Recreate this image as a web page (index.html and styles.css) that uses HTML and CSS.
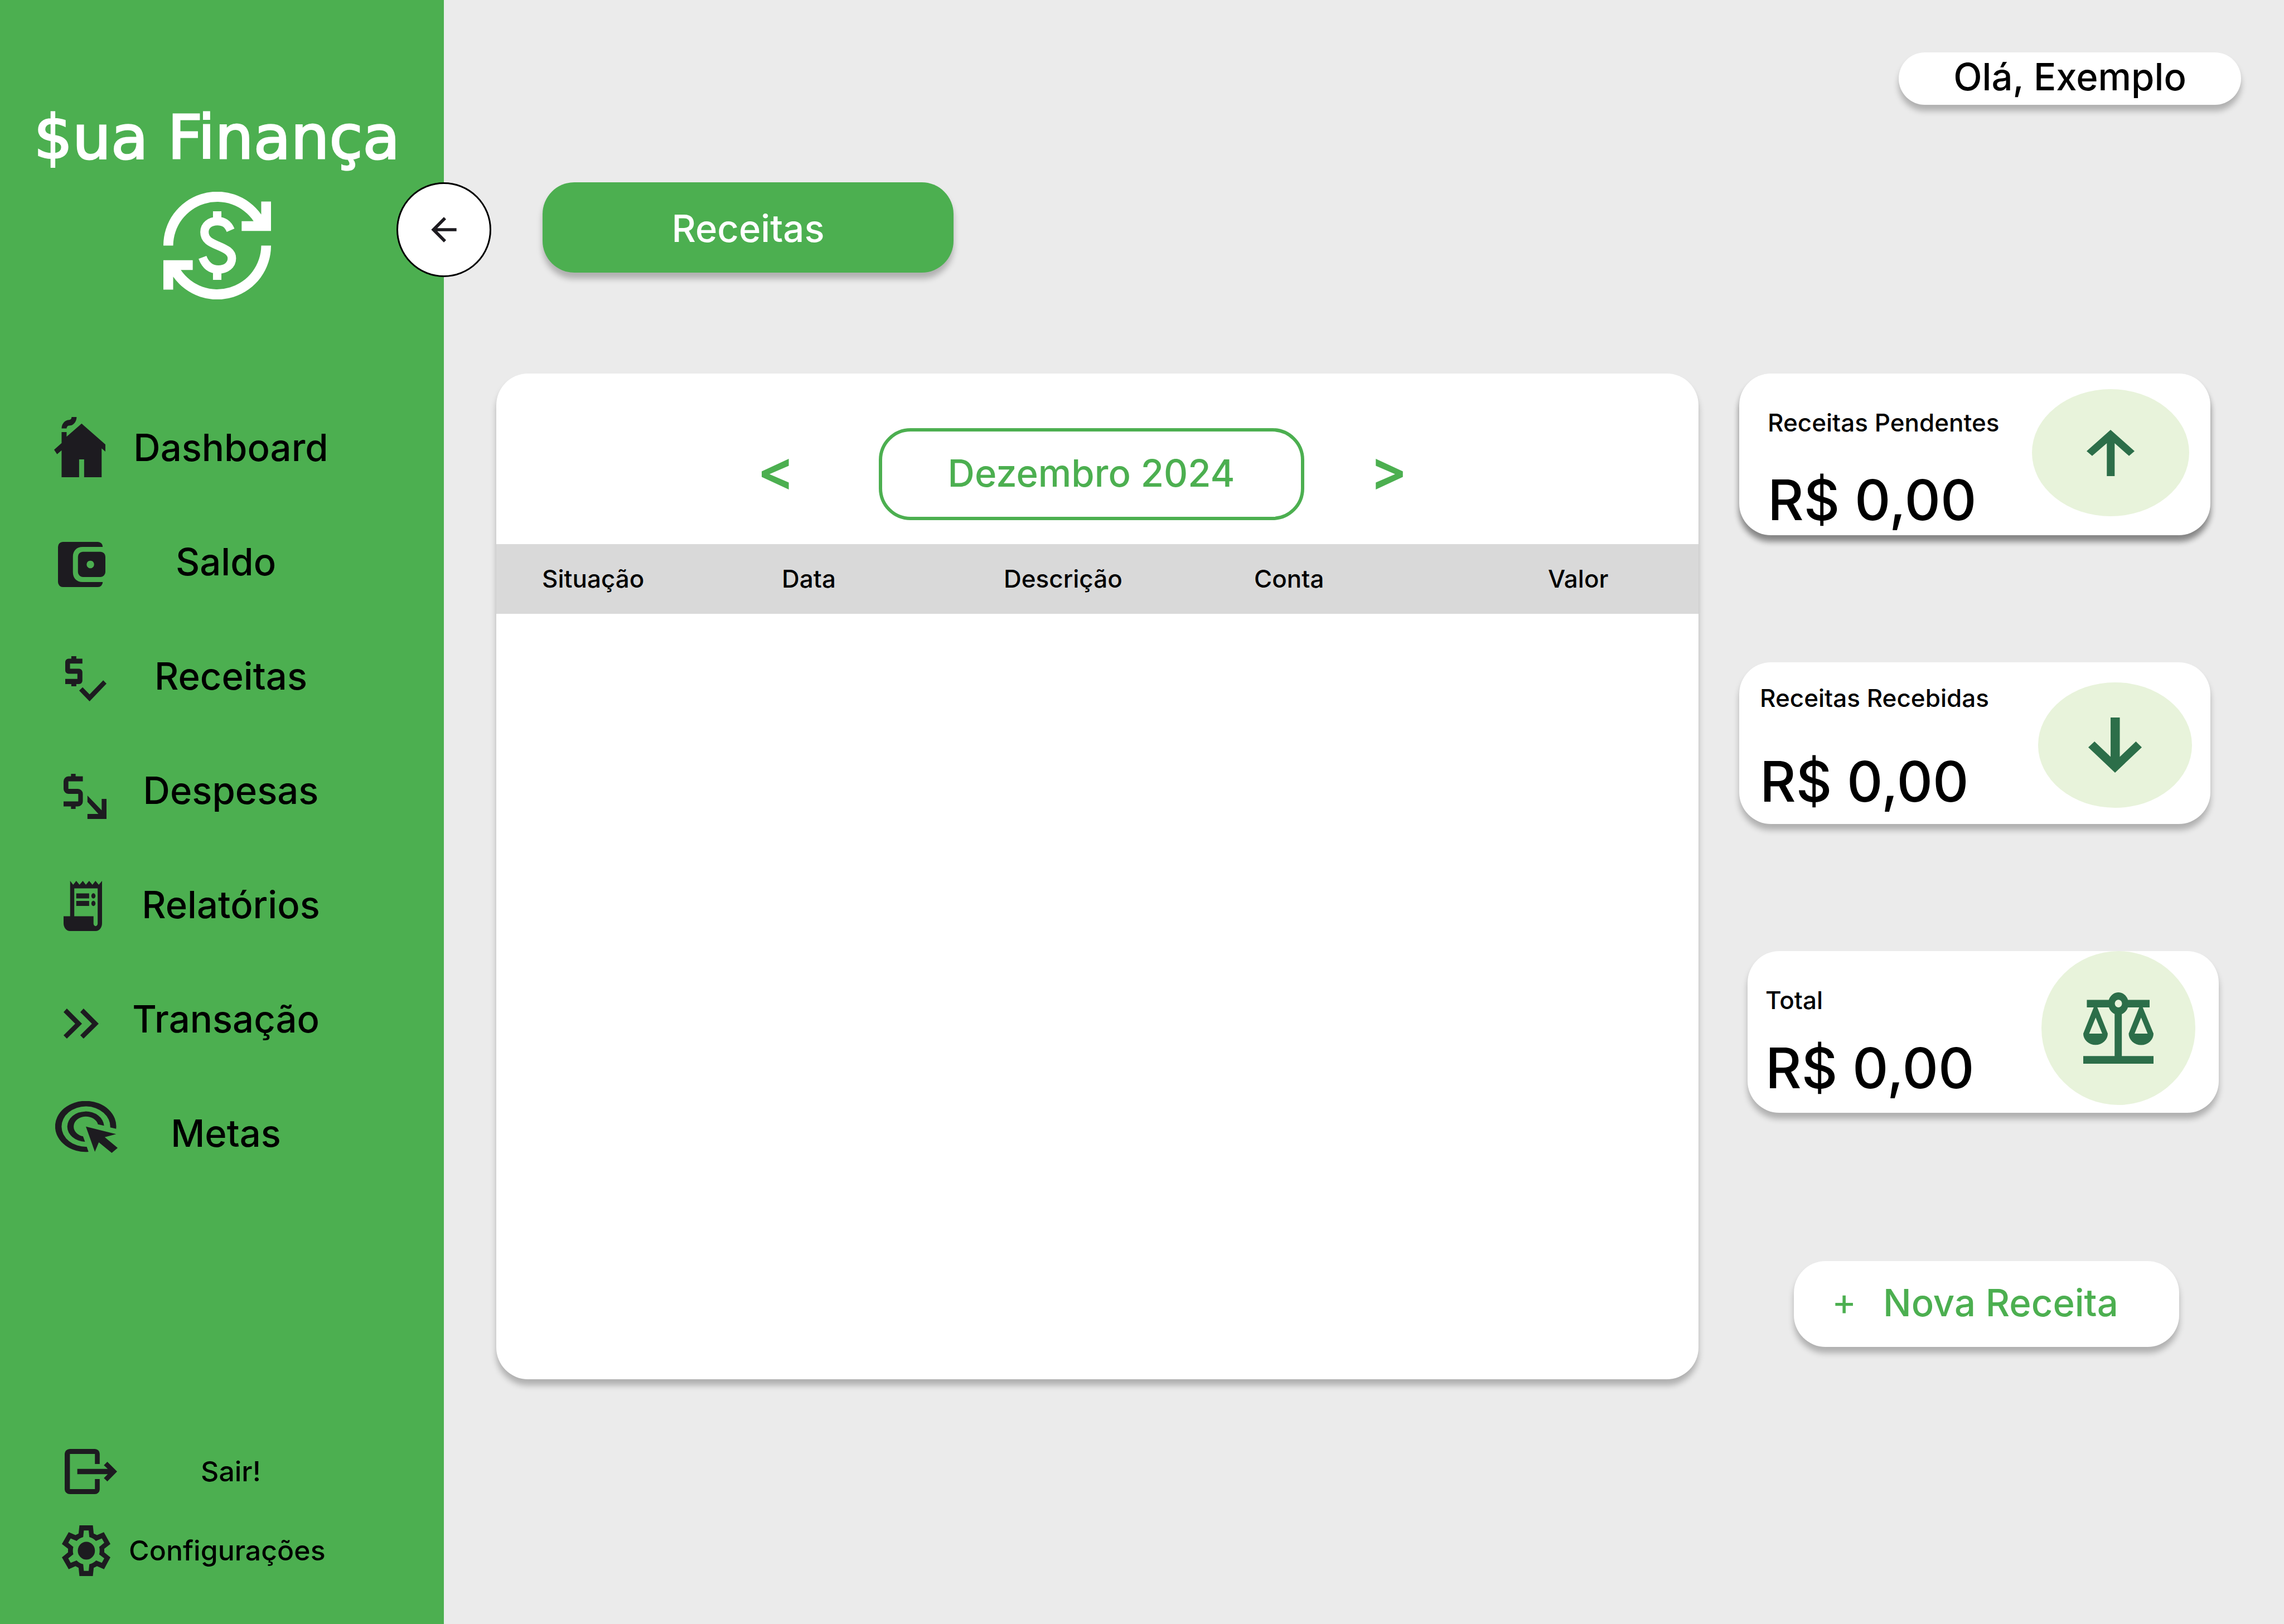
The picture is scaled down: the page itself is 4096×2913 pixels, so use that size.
FILE: index.html
```html
<!DOCTYPE html>
<html lang="pt-BR">
<head>
<meta charset="utf-8">
<meta name="viewport" content="width=device-width, initial-scale=1">
<title>Sua Finança - Receitas</title>
<link rel="stylesheet" href="styles.css">
</head>
<body>
<div class="app">
  <aside class="sidebar">
    <div class="brand">
      <div class="brand__name">$ua Finança</div>
      <svg class="brand__logo" viewBox="0 0 11 11" aria-hidden="true">
        <path fill="currentColor" d="M0 5.5A5.5 5.5 0 0 1 10 2.32V1h1v3H8V3h1.22A4.5 4.5 0 0 0 1 5.5z"/>
        <path fill="currentColor" transform="rotate(180 5.5 5.5)" d="M0 5.5A5.5 5.5 0 0 1 10 2.32V1h1v3H8V3h1.22A4.5 4.5 0 0 0 1 5.5z"/>
        <path fill="none" stroke="currentColor" stroke-width=".86" d="M6.87 3.93C6.6 3.3 6.2 3 5.52 3C4.75 3 4.2 3.45 4.2 4.12C4.2 4.95 4.9 5.22 5.6 5.52C6.4 5.86 7 6.15 7 6.8C7 7.5 6.4 7.95 5.62 7.95C4.8 7.95 4.3 7.5 4 6.7M5.5 2v.8M5.5 8.2V9"/>
      </svg>
    </div>

    <nav class="nav" aria-label="Principal">
      <a class="nav__item" href="#dashboard">
        <svg class="nav__icon" viewBox="0 0 128 128" aria-hidden="true">
          <svg x="5" y="9" width="92" height="108" viewBox="40 -960 820 840" preserveAspectRatio="none"><path d="M160-120v-375l-72 55-48-64 120-92v-154h80v64l240-182 440 336-48 63-72-54v405H520v-250h-80v250H160zM160-800q0-50 35-85t85-35q17 0 28.500-11.500T320-960h80q0 50-35 85t-85 35q-17 0-28.500 11.500T240-800h-80z"/></svg>
        </svg>
        <span class="nav__label">Dashboard</span>
      </a>
      <a class="nav__item" href="#saldo">
        <svg class="nav__icon" viewBox="0 0 128 128" aria-hidden="true">
          <svg x="12" y="28" width="85" height="81" viewBox="92 690 216 219" preserveAspectRatio="none"><path d="M114 690H274a22 24 0 0 1 22 24H204c-28 0-44 20-44 47v76c0 28 16 48 44 48H296a22 24 0 0 1-22 24H114a22 24 0 0 1-22-24V714a22 24 0 0 1 22-24z"/><path fill-rule="evenodd" d="M205 738h81a22 24 0 0 1 22 24v74a22 24 0 0 1-22 24h-81a22 24 0 0 1-22-24v-74a22 24 0 0 1 22-24zM239.500 781a17 18.500 0 1 0 .1 0z"/></svg>
        </svg>
        <span class="nav__label">Saldo </span>
      </a>
      <a class="nav__item" href="#receitas" aria-current="page">
        <svg class="nav__icon" viewBox="0 0 128 128" aria-hidden="true">
          <svg x="25" y="28" width="74" height="81" viewBox="124 1243 190 219" preserveAspectRatio="none"><path d="M152 1243h23v12h28v24h-57v25h42a15 16 0 0 1 15 16v42a15 16 0 0 1-15 16h-13v11h-23v-11h-28v-25h56v-25h-41a15 16 0 0 1-15-16v-41a15 16 0 0 1 15-16h13zM236 1462l-48-52 16-16 32 34 63-68 15 16z"/></svg>
        </svg>
        <span class="nav__label">Receitas</span>
      </a>
      <a class="nav__item" href="#despesas">
        <svg class="nav__icon" viewBox="0 0 128 128" aria-hidden="true">
          <svg x="22" y="34" width="77" height="81" viewBox="118 112 196 162" preserveAspectRatio="none"><path d="M152 112h21v9h33v18h-66v27h44a22 18 0 0 1 22 18v27a22 18 0 0 1-22 18h-11v9h-21v-9h-34v-18h67v-27h-45a22 18 0 0 1-22-18v-27a22 18 0 0 1 22-18h12zM227 190l65 53v-41h22v72h-87v-18h50l-50-43z"/></svg>
        </svg>
        <span class="nav__label">Despesas</span>
      </a>
      <a class="nav__item" href="#relatorios">
        <svg class="nav__icon" viewBox="0 0 128 128" aria-hidden="true">
          <svg x="22" y="21" width="69" height="90" viewBox="116 495 176 180" preserveAspectRatio="none"><path fill-rule="evenodd" d="M146 495l14 14 14-14 15 14 15-14 14 14 15-14 15 14 14-14 15 14 15-14V647a29 28 0 0 1-29 28H145a29 28 0 0 1-29-28V622h30zM165 522H272V648a9 9 0 0 1-19 0V622H165z"/><path d="M174 540h59v18h-59zM174 567h59v18h-59z"/><circle cx="252.500" cy="549" r="9.500"/><circle cx="252.500" cy="576" r="9.500"/></svg>
        </svg>
        <span class="nav__label">Relatórios</span>
      </a>
      <a class="nav__item" href="#transacao">
        <svg class="nav__icon" viewBox="0 0 128 128" aria-hidden="true">
          <svg x="22" y="45" width="63" height="54" viewBox="116 952 160 107" preserveAspectRatio="none"><path d="M116 965l15-13 69 54-69 53-15-12 53-41zM192 965l15-13 69 54-69 53-15-12 53-41z"/></svg>
        </svg>
        <span class="nav__label">Transação </span>
      </a>
      <a class="nav__item" href="#metas">
        <svg class="nav__icon" viewBox="0 0 128 128" aria-hidden="true">
          <svg x="7" y="6" width="112" height="93" viewBox="78 1284 285 185" preserveAspectRatio="none"><path d="M356 1383A139.500 91 0 1 0 230 1465L222 1447A111 72 0 1 1 329 1378zM301 1372A84 54 0 1 0 214 1429L205 1410A56 36 0 1 1 273 1367zM218 1375l138 27-52 11 59 38-27 18-59-38-18 34z"/></svg>
        </svg>
        <span class="nav__label">Metas </span>
      </a>
    </nav>

    <div class="nav nav--footer">
      <a class="nav__item" href="#sair">
        <svg class="nav__icon" viewBox="0 0 128 92" aria-hidden="true">
          <svg x="24" y="6" width="94" height="81" viewBox="121 172 241 357" preserveAspectRatio="none"><path d="M145 172H260a22 38 0 0 1 22 38V291H260V212H145V489H260V410H282V491a22 38 0 0 1-22 38H145a24 38 0 0 1-24-38V210a24 38 0 0 1 24-38zM179 330H319L301 301L317 273L362 351L317 429L301 402L319 371H179z"/></svg>
        </svg>
        <span class="nav__label">Sair!</span>
      </a>
      <a class="nav__item" href="#configuracoes">
        <svg class="nav__icon" viewBox="0 0 128 92" aria-hidden="true">
          <svg x="19" y="1" width="87" height="91" viewBox="109 777 221 398" preserveAspectRatio="none"><path fill-rule="evenodd" d="M189 777H250L254 841L269 854L300 831L330 923L302 961V989L330 1028L301 1121L269 1097L254 1110L250 1175H189L185 1110L171 1097L140 1121L109 1028L137 989V961L109 923L140 831L171 854L185 841zM209 817H231L234 869Q252 878 264 900L291 880L302 914L279 946Q283 975 279 1005L302 1036L291 1071L265 1052Q252 1074 234 1082L231 1134H209L206 1082Q188 1074 176 1052L149 1071L138 1036L161 1004Q157 975 161 946L138 914L149 880L176 900Q188 878 206 869z"/><ellipse cx="220.500" cy="976" rx="39" ry="70"/></svg>
        </svg>
        <span class="nav__label">Configurações </span>
      </a>
    </div>

    <button class="sidebar__toggle" type="button" aria-label="Recolher menu">
      <svg class="sidebar__toggle-icon" viewBox="0 -960 960 960" aria-hidden="true"><path d="M313-440l224 224-57 56-320-320 320-320 57 56-224 224h487v80z"/></svg>
    </button>
  </aside>

  <main class="main">
    <header class="topbar"><div class="greeting">Olá, Exemplo</div></header>
    <h1 class="title">Receitas</h1>

    <div class="content">
      <section class="panel">
        <div class="month">
          <button class="month__step month__step--prev" type="button" aria-label="Mês anterior">&lt;</button>
          <button class="month__current" type="button">Dezembro 2024</button>
          <button class="month__step month__step--next" type="button" aria-label="Próximo mês">&gt;</button>
        </div>
        <table class="table">
          <thead>
            <tr>
              <th class="table__status" scope="col">Situação</th>
              <th class="table__date" scope="col">Data</th>
              <th class="table__description" scope="col">Descrição</th>
              <th class="table__account" scope="col">Conta</th>
              <th class="table__value" scope="col">Valor</th>
            </tr>
          </thead>
        </table>
      </section>

      <aside class="summary">
        <section class="card card--pending">
          <div class="card__text">
            <h2 class="card__label">Receitas Pendentes</h2>
            <p class="card__value">R$ 0,00</p>
          </div>
          <div class="card__badge">
            <svg width="86" height="83" viewBox="1115 540 147 363" preserveAspectRatio="none" aria-hidden="true"><path d="M1188.500 540L1262 707L1245 745L1201 645V903H1177V645L1132 745L1115 707z"/></svg>
          </div>
        </section>
        <section class="card card--received">
          <div class="card__text">
            <h2 class="card__label">Receitas Recebidas</h2>
            <p class="card__value">R$ 0,00</p>
          </div>
          <div class="card__badge">
            <svg width="96" height="99" viewBox="1119 541 163 434" preserveAspectRatio="none" aria-hidden="true"><path d="M1187 541H1215V850L1264 729L1282 775L1200.500 975L1119 775L1138 729L1187 850z"/></svg>
          </div>
        </section>
        <section class="card card--total">
          <div class="card__text">
            <h2 class="card__label">Total</h2>
            <p class="card__value">R$ 0,00</p>
          </div>
          <div class="card__badge">
            <svg width="126" height="128" viewBox="1106 459 215 561" preserveAspectRatio="none" aria-hidden="true"><path fill-rule="evenodd" d="M1213.500 459a31 88 0 1 1-.1 0zM1213.500 517a11 30 0 1 0 .1 0z"/><path d="M1117 518h70v59h-70zM1240 518h69v59h-69zM1202 628h22v340h-22zM1106 960h215v60h-215z"/><path fill-rule="evenodd" d="M1138 577h11l32 206a37.500 89 0 0 1-75 0zM1144 657l-20 126h40zM1277 577h11l33 206a37.500 89 0 0 1-76 0zM1283 657l-20 126h40z"/></svg>
          </div>
        </section>
        <button class="new-entry" type="button"><span class="new-entry__plus">+</span>Nova Receita</button>
      </aside>
    </div>
  </main>
</div>
</body>
</html>
```
FILE: styles.css
```css
:root {
  --green: #4caf50;
  --page: #ebebeb;
  --ink: #1d1b20;
  --badge: #e8f3db;
  --badge-ink: #2c6e49;
  --shadow: 0 11px 11px rgba(0, 0, 0, .25);
  --radius: 57px;
}

* { box-sizing: border-box; }

body {
  margin: 0;
  background: var(--page);
  color: #000;
  font: 450 67px/68px Inter, "Liberation Sans", sans-serif;
}

button {
  margin: 0;
  padding: 0;
  border: 0;
  background: none;
  color: inherit;
  font: inherit;
  cursor: pointer;
}

h1, h2, p { margin: 0; font: inherit; }
a { color: inherit; text-decoration: none; }
svg { display: block; }

.app { display: flex; min-height: 100vh; }

/* Sidebar */
.sidebar {
  position: relative;
  flex: none;
  display: flex;
  flex-direction: column;
  width: 796px;
  padding: 183px 0 86px;
  background: var(--green);
}

.brand {
  display: flex;
  flex-direction: column;
  align-items: center;
  gap: 33px;
  padding-right: 18px;
  color: #fff;
}

.brand__name {
  font: 109px/128px "DejaVu Sans", sans-serif;
  white-space: nowrap;
  -webkit-text-stroke: 3px #fff;
}

.brand__logo { width: 193px; height: 193px; }

.nav {
  display: flex;
  flex-direction: column;
  gap: 77px;
  margin-top: 202px;
}

.nav--footer {
  gap: 50px;
  margin-top: auto;
  font-size: 50px;
}

.nav__item {
  display: flex;
  align-items: center;
  padding: 0 188px 0 92px;
}

.nav__icon {
  flex: none;
  width: 128px;
  fill: var(--ink);
}

.nav__label {
  flex: 1;
  text-align: center;
  white-space: pre;
}

.sidebar__toggle {
  position: absolute;
  top: 327px;
  right: -85px;
  display: grid;
  place-items: center;
  width: 170px;
  height: 170px;
  border: 3px solid #000;
  border-radius: 50%;
  background: #fff;
}

.sidebar__toggle-icon { width: 68px; height: 68px; fill: var(--ink); }

/* Main column */
.main {
  flex: 1;
  display: flex;
  flex-direction: column;
  min-width: 0;
  padding: 94px 117px 439px 94px;
}

.topbar {
  display: flex;
  justify-content: flex-end;
  margin-right: -40px;
}

.greeting {
  width: 614px;
  padding-bottom: 6px;
  border-radius: 47px;
  background: #fff;
  box-shadow: var(--shadow);
  line-height: 88px;
  text-align: center;
}

.title {
  width: 737px;
  margin: 139px 0 181px 83px;
  padding-top: 4px;
  border-radius: var(--radius);
  background: var(--green);
  box-shadow: var(--shadow);
  color: #fff;
  line-height: 158px;
  text-align: center;
}

.content {
  flex: 1;
  display: flex;
  gap: 73px;
}

/* Entries panel */
.panel {
  flex: 1;
  border-radius: var(--radius);
  background: #fff;
  box-shadow: var(--shadow);
}

.month {
  display: grid;
  grid-template-columns: 1fr 763px 1fr;
  align-items: center;
  padding: 98px 22px 43px 0;
  color: var(--green);
}

.month__current {
  padding-bottom: 4px;
  border: 6px solid;
  border-radius: var(--radius);
  line-height: 149px;
}

.month__step {
  width: 96px;
  padding-bottom: 16px;
  font-size: 100px;
  font-weight: 600;
}

.month__step--prev { justify-self: end; margin-right: 136px; }
.month__step--next { justify-self: start; margin-left: 104px; }

.table {
  width: 100%;
  border-collapse: collapse;
  table-layout: fixed;
}

.table th {
  padding: 0 0 0 82px;
  background: #d9d9d9;
  font-size: 44px;
  font-weight: inherit;
  line-height: 125px;
  text-align: left;
}

.table__status { width: 430px; }
.table__date { width: 398px; }
.table__description { width: 449px; }
.table__account { width: 527px; }

/* Summary cards */
.summary {
  flex: none;
  display: flex;
  flex-direction: column;
  gap: 228px;
  width: 860px;
}

.card {
  display: flex;
  align-items: flex-start;
  justify-content: space-between;
  width: 845px;
  height: 290px;
  border-radius: var(--radius);
  background: #fff;
  box-shadow: var(--shadow);
}

.card__text { display: flex; flex-direction: column; }
.card__label { font-size: 44px; line-height: 56px; }
.card__value { font-size: 100px; line-height: 124px; }

.card__badge {
  display: grid;
  place-items: center;
  width: 276px;
  height: 225px;
  border-radius: 50%;
  background: var(--badge);
  fill: var(--badge-ink);
}

.card--pending { padding: 28px 38px 0 51px; box-shadow: var(--shadow), var(--shadow); }
.card--pending .card__text { gap: 49px; padding-top: 32px; }
.card--pending .card__badge { width: 282px; height: 228px; }

.card--received { padding: 36px 33px 0 37px; }
.card--received .card__text { gap: 60px; }

.card--total { align-self: flex-end; padding: 0 42px 0 32px; }
.card--total .card__text { gap: 32px; padding-top: 60px; }
.card--total .card__badge { height: 276px; }

.new-entry {
  display: flex;
  align-items: center;
  height: 154px;
  margin: 38px 71px 0 98px;
  padding: 0 0 4px 68px;
  border-radius: var(--radius);
  background: #fff;
  box-shadow: var(--shadow);
  color: var(--green);
}

.new-entry__plus {
  width: 92px;
  padding-bottom: 4px;
  font-weight: 400;
  text-align: left;
}
```
